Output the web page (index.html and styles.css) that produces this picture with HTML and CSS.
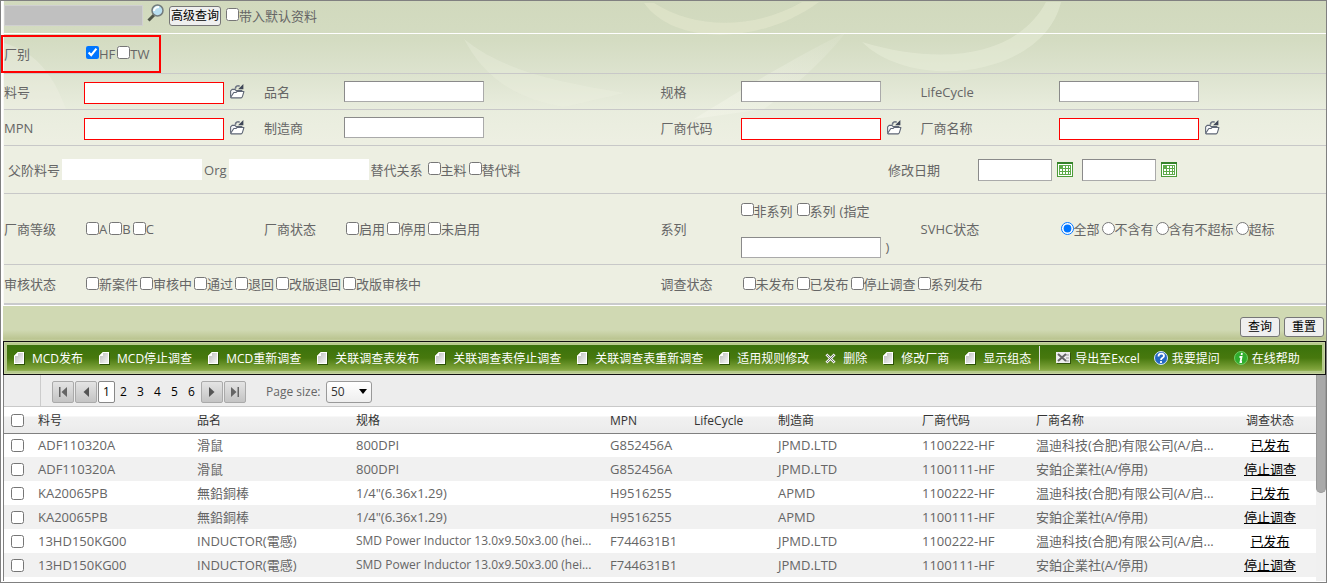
FILE: index.html
```html
<!DOCTYPE html>
<html lang="zh-CN">
<head>
<meta charset="utf-8">
<title>MCD 查询</title>
<link rel="stylesheet" href="styles.css">
</head>
<body>
<svg class="defs" aria-hidden="true">
  <defs>
    <linearGradient id="pg" x1="0" y1="0" x2="1" y2="1"><stop offset="0" stop-color="#bdbdbd"/><stop offset="1" stop-color="#f6f6f6"/></linearGradient>
    <linearGradient id="fade" x1="0" y1="1" x2="1" y2="0"><stop offset="0" stop-color="#f2f4e8" stop-opacity=".6"/><stop offset="1" stop-color="#f2f4e8" stop-opacity=".1"/></linearGradient>
    <symbol id="page" viewBox="0 0 11 13"><path d="M4 1h7v12H1V4z" fill="#2d5208"/><path d="M4 0h6v12H0V4z" fill="#fff"/><path d="M4 1h5v10H1V4h3z" fill="url(#pg)"/><path d="M0 4h4V0z" fill="#fff"/></symbol>
    <symbol id="folder" viewBox="0 0 15 14"><path d="M1.500 12V6.500L3 5h2.500l1 1h5.500v2" fill="#f4f5f7" stroke="#5e6675"/><path d="M1.500 12.500 4.500 8h2l1-1H14l-1.500 5-1 1H2z" fill="#fff" stroke="#5e6675" stroke-linejoin="round"/><path d="M6 4.500C6 2 8 1 10 2" fill="none" stroke="#6b7282" stroke-width="1.500"/><path d="M13.500 0v5H8.500z" fill="#3f4657"/></symbol>
    <symbol id="cal" viewBox="0 0 16 15"><rect x=".5" y=".5" width="15" height="14" fill="#fff" stroke="#4c9b38"/><path d="M0 0h16v2H0z" fill="#35822a"/><path d="M2 3h12v10H2z" fill="#5daa48"/><path d="M6 4h2v2H6zm3 0h2v2H9zm3 0h1v2h-1zM3 7h2v2H3zm3 0h2v2H6zm3 0h2v2H9zm3 0h1v2h-1zM3 10h2v2H3zm3 0h2v2H6zm3 0h2v2H9zm3 0h1v2h-1z" fill="#fff"/></symbol>
    <symbol id="first" viewBox="0 0 10 10"><path d="M1 0h1.500v10H1zM9 0v10L3.500 5z" fill="#666"/></symbol>
    <symbol id="prev" viewBox="0 0 10 10"><path d="M8 0v10L2.500 5z" fill="#555"/></symbol>
  </defs>
</svg>
<main class="page">
  <section class="query">
    <svg class="swirl" viewBox="0 0 1327 150" width="1327" height="150" aria-hidden="true">
      <path d="M640 2C670 44 755 45 815 1L798 1C750 29 690 28 650 2z" fill="#f0f0d8" opacity=".35"/>
      <path d="M1042 1C1015 52 945 67 858 41C910 92 1040 75 1057 1z" fill="#eef2df" opacity=".4"/>
      <path d="M842 31C800 52 756 77 690 118L760 108C785 90 820 60 842 31z" fill="url(#fade)"/>
      <path d="M460 38C500 70 550 80 620 92L560 106C500 96 475 66 460 38z" fill="#eef2e0" opacity=".3"/>
      <path d="M0 42C35 52 50 77 62 108H0z" fill="#f0f2e4" opacity=".35"/>
    </svg>
    <div class="searchbar">
      <input class="quick" type="text" aria-label="快速查询">
      <button class="lens" type="button" aria-label="查找"><svg width="18" height="18" viewBox="0 0 18 18"><path d="M1.500 16.500 7 11" stroke="#4f5548" stroke-width="3"/><circle cx="10.500" cy="6.500" r="5.500" fill="#b9dff1" stroke="#737b7c" stroke-width="1.500"/><path d="M7 7c0-2 2-4 5-4" fill="none" stroke="#fff" stroke-width="2"/></svg></button>
      <button class="btn" type="button">高级查询</button>
      <label><input type="checkbox">带入默认资料</label>
    </div>
    <div class="row tall">
      <div class="plant"><span class="name">厂别</span><span class="checks"><label><input type="checkbox" checked>HF</label><label><input type="checkbox">TW</label></span></div>
    </div>
    <div class="row">
      <label class="name" for="pn">料号</label><div class="field"><input class="box need" id="pn" type="text"><svg class="fold"><use href="#folder"/></svg></div>
      <label class="name" for="nm">品名</label><div class="field"><input class="box" id="nm" type="text"></div>
      <label class="name" for="sp">规格</label><div class="field"><input class="box" id="sp" type="text"></div>
      <label class="name" for="lc">LifeCycle</label><div class="field"><input class="box" id="lc" type="text"></div>
    </div>
    <div class="row">
      <label class="name" for="mpn">MPN</label><div class="field"><input class="box need" id="mpn" type="text"><svg class="fold"><use href="#folder"/></svg></div>
      <label class="name" for="mk">制造商</label><div class="field"><input class="box" id="mk" type="text"></div>
      <label class="name" for="vc">厂商代码</label><div class="field"><input class="box need" id="vc" type="text"><svg class="fold"><use href="#folder"/></svg></div>
      <label class="name" for="vn">厂商名称</label><div class="field"><input class="box need" id="vn" type="text"><svg class="fold"><use href="#folder"/></svg></div>
    </div>
    <div class="row parent">
      <div class="inline">
        <label for="pp">父阶料号</label><input class="plain" id="pp" type="text">
        <label for="org">Org</label><input class="plain" id="org" type="text">
        <span>替代关系</span>
        <span class="checks"><label><input type="checkbox">主料</label><label><input type="checkbox">替代料</label></span>
      </div>
      <div class="dates">
        <label class="datename" for="d1">修改日期</label>
        <input class="box date" id="d1" type="text"><svg class="cal"><use href="#cal"/></svg>
        <input class="box date" type="text" aria-label="修改日期止"><svg class="cal"><use href="#cal"/></svg>
      </div>
    </div>
    <div class="row series-row">
      <span class="name">厂商等级</span><div class="checks in"><label><input type="checkbox">A</label><label><input type="checkbox">B</label><label><input type="checkbox">C</label></div>
      <span class="name">厂商状态</span><div class="checks in"><label><input type="checkbox">启用</label><label><input type="checkbox">停用</label><label><input type="checkbox">未启用</label></div>
      <span class="name">系列</span>
      <div class="series">
        <div class="checks wide"><label><input type="checkbox">非系列</label><label><input type="checkbox">系列</label><span>(指定</span></div>
        <div class="field"><input class="box" type="text" aria-label="指定系列"><span>)</span></div>
      </div>
      <span class="name">SVHC状态</span><div class="checks in"><label><input type="radio" name="svhc" checked>全部</label><label><input type="radio" name="svhc">不含有</label><label><input type="radio" name="svhc">含有不超标</label><label><input type="radio" name="svhc">超标</label></div>
    </div>
    <div class="row tall last">
      <span class="name">审核状态</span><div class="checks in span3"><label><input type="checkbox">新案件</label><label><input type="checkbox">审核中</label><label><input type="checkbox">通过</label><label><input type="checkbox">退回</label><label><input type="checkbox">改版退回</label><label><input type="checkbox">改版审核中</label></div>
      <span class="name">调查状态</span><div class="checks in span3"><label><input type="checkbox">未发布</label><label><input type="checkbox">已发布</label><label><input type="checkbox">停止调查</label><label><input type="checkbox">系列发布</label></div>
    </div>
  </section>
  <div class="actions"><button class="btn act" type="button">查询</button><button class="btn act" type="button">重置</button></div>
  <nav class="toolbar">
    <div class="tools">
      <button type="button"><svg class="doc"><use href="#page"/></svg>MCD发布</button>
      <button type="button"><svg class="doc"><use href="#page"/></svg>MCD停止调查</button>
      <button type="button"><svg class="doc"><use href="#page"/></svg>MCD重新调查</button>
      <button type="button"><svg class="doc"><use href="#page"/></svg>关联调查表发布</button>
      <button type="button"><svg class="doc"><use href="#page"/></svg>关联调查表停止调查</button>
      <button type="button"><svg class="doc"><use href="#page"/></svg>关联调查表重新调查</button>
      <button type="button"><svg class="doc"><use href="#page"/></svg>适用规则修改</button>
      <button type="button"><svg class="doc" viewBox="0 0 12 12"><path d="m1.500 1.500 9 9m0-9-9 9" stroke="#f2f2f2" stroke-width="3"/><path d="m2 2 8 8m0-8-8 8" stroke="#666c60"/></svg>删除</button>
      <button type="button"><svg class="doc"><use href="#page"/></svg>修改厂商</button>
      <button type="button"><svg class="doc"><use href="#page"/></svg>显示组态</button>
    </div>
    <div class="tools extra">
      <button type="button"><svg class="big" viewBox="0 0 16 16"><path d="M1 3h14v11H1z" fill="#31520c"/><path d="M0 2h14v11H0z" fill="#eee"/><path d="M10 5h3M10 8h3M10 11h3" stroke="#999"/><path d="m2 4 8 7m0-7-8 7" stroke="#666" stroke-width="2"/></svg>导出至Excel</button>
      <button type="button"><svg class="big" viewBox="0 0 16 16"><circle cx="8" cy="8" r="6.500" fill="#2368c4" stroke="#dbe9fb"/><path d="M5.500 6.500c0-4 5.500-3.500 5.500-.5C11 8 8 7.500 8 10M8 11v2" fill="none" stroke="#fff" stroke-width="1.800"/></svg>我要提问</button>
      <button type="button"><svg class="big" viewBox="0 0 16 16"><circle cx="8" cy="8" r="6.500" fill="#30ad2d" stroke="#74cf68"/><path d="m9 3-.5 2M6.500 7h2l-1 5H9" fill="none" stroke="#fff" stroke-width="1.800"/></svg>在线帮助</button>
    </div>
  </nav>
  <div class="gridwrap">
    <section class="grid">
      <div class="pager">
        <div class="pages">
          <button class="nav" type="button" aria-label="首页"><svg><use href="#first"/></svg></button>
          <button class="nav" type="button" aria-label="上一页"><svg><use href="#prev"/></svg></button>
          <a class="cur" href="#">1</a><a href="#">2</a><a href="#">3</a><a href="#">4</a><a href="#">5</a><a href="#">6</a>
          <button class="nav after" type="button" aria-label="下一页"><svg class="flip"><use href="#prev"/></svg></button>
          <button class="nav after" type="button" aria-label="末页"><svg class="flip"><use href="#first"/></svg></button>
          <label class="sizename" for="size">Page size:</label>
          <span class="pick"><select id="size"><option>50</option></select></span>
        </div>
      </div>
      <table>
        <colgroup><col class="c0"><col class="c1"><col class="c1"><col class="c3"><col class="c4"><col class="c4"><col class="c6"><col class="c7"><col class="c8"><col class="c9"></colgroup>
        <thead><tr><th><input type="checkbox" aria-label="全选"></th><th>料号</th><th>品名</th><th>规格</th><th>MPN</th><th>LifeCycle</th><th>制造商</th><th>厂商代码</th><th>厂商名称</th><th class="mid">调查状态</th></tr></thead>
        <tbody>
          <tr><td><input type="checkbox" aria-label="选择"></td><td>ADF110320A</td><td>滑鼠</td><td>800DPI</td><td>G852456A</td><td></td><td>JPMD.LTD</td><td>1100222-HF</td><td>温迪科技(合肥)有限公司(A/启...</td><td class="mid"><a href="#">已发布</a></td></tr>
          <tr><td><input type="checkbox" aria-label="选择"></td><td>ADF110320A</td><td>滑鼠</td><td>800DPI</td><td>G852456A</td><td></td><td>JPMD.LTD</td><td>1100111-HF</td><td>安鉑企業社(A/停用)</td><td class="mid"><a href="#">停止调查</a></td></tr>
          <tr><td><input type="checkbox" aria-label="选择"></td><td>KA20065PB</td><td>無鉛銅棒</td><td>1/4"(6.36x1.29)</td><td>H9516255</td><td></td><td>APMD</td><td>1100222-HF</td><td>温迪科技(合肥)有限公司(A/启...</td><td class="mid"><a href="#">已发布</a></td></tr>
          <tr><td><input type="checkbox" aria-label="选择"></td><td>KA20065PB</td><td>無鉛銅棒</td><td>1/4"(6.36x1.29)</td><td>H9516255</td><td></td><td>APMD</td><td>1100111-HF</td><td>安鉑企業社(A/停用)</td><td class="mid"><a href="#">停止调查</a></td></tr>
          <tr><td><input type="checkbox" aria-label="选择"></td><td>13HD150KG00</td><td>INDUCTOR(電感)</td><td class="long">SMD Power Inductor 13.0x9.50x3.00 (hei...</td><td>F744631B1</td><td></td><td>JPMD.LTD</td><td>1100222-HF</td><td>温迪科技(合肥)有限公司(A/启...</td><td class="mid"><a href="#">已发布</a></td></tr>
          <tr><td><input type="checkbox" aria-label="选择"></td><td>13HD150KG00</td><td>INDUCTOR(電感)</td><td class="long">SMD Power Inductor 13.0x9.50x3.00 (hei...</td><td>F744631B1</td><td></td><td>JPMD.LTD</td><td>1100111-HF</td><td>安鉑企業社(A/停用)</td><td class="mid"><a href="#">停止调查</a></td></tr>
        </tbody>
      </table>
    </section>
    <div class="track"><div class="thumb"></div></div>
  </div>
</main>
</body>
</html>
```
FILE: styles.css
```css
* { box-sizing: border-box; }
body {
  margin: 0;
  font: 13px/18px "Open Sans", "Noto Sans CJK SC", sans-serif;
  color: #666;
}
button, input, select { font: inherit; margin: 0; }
input[type="checkbox"], input[type="radio"] { width: 13px; height: 13px; flex: none; display: block; }
svg { display: block; flex: none; }
.defs { position: absolute; width: 0; height: 0; }
.page { min-height: 100vh; border: 1px solid #808080; padding-left: 2px; background: #fff; overflow: hidden; }
.query {
  position: relative;
  border-left: 1px solid #f8f8f4;
  background: linear-gradient(#d1d9bd 0, #d4dcc2 40px, #dde3cf 74px, #e9edde 110px, #edefe2 140px);
}
.swirl { position: absolute; top: 0; left: 0; }
.searchbar { position: relative; display: flex; align-items: center; height: 33px; padding-bottom: 3px; border-bottom: 1px solid #fff; }
.quick { width: 139px; height: 21px; border: 1px solid #d0d0d0; background: #c0c0c0; margin-right: 4px; }
.lens { border: 0; padding: 0; background: none; margin-right: 4px; margin-bottom: 6px; }
.btn {
  height: 20px; padding: 0 1px; border: 1px solid #767676; border-radius: 3px;
  background: #efefef; color: #000; font-size: 12px; line-height: 18px;
}
.searchbar label { margin-left: 5px; }
label { display: flex; align-items: center; white-space: nowrap; }
label > input[type="checkbox"], label > input[type="radio"] { margin-bottom: 2px; }
.row {
  position: relative;
  display: grid;
  grid-template-columns: 80px 180px 80px minmax(0, 316fr) 80px 180px 138px minmax(0, 267fr);
  align-items: center;
  height: 36px;
  border-bottom: 1px solid #c8c8c8;
}
.tall { height: 40px; }
.last { border-bottom: 2px solid #c9cacc; }
.plant {
  grid-column: 1 / 3; justify-self: start; position: relative;
  display: flex; align-items: center; width: 160px; height: 38px;
  margin-left: -3px; padding-left: 1px; border: 2px solid #f00;
}
.plant .name { width: 82px; }
.field { display: flex; align-items: center; gap: 5px; white-space: nowrap; }
.box { width: 140px; height: 21px; border: 1px solid #aaa; border-top-color: #8a8a8a; border-left-color: #8a8a8a; background: #fff; }
.need { height: 22px; border-color: #f00; }
.row .need { margin-top: 2px; }
.fold { width: 16px; height: 15px; }
.checks { display: flex; align-items: center; gap: 2px; white-space: nowrap; }
.in { padding-left: 2px; }
.wide { gap: 4px; }
.span3 { grid-column: span 3; }
.parent { grid-template-columns: minmax(0, 1fr) 438px; height: 48px; }
.inline { display: flex; align-items: center; gap: 2px; padding-left: 4px; white-space: nowrap; }
.inline .checks { margin-left: 3px; }
.plain { width: 140px; height: 21px; border: 0; background: #fff; }
.dates { display: flex; align-items: center; }
.datename { width: 90px; }
.date { width: 74px; height: 22px; }
.cal { width: 16px; height: 15px; margin: 0 9px 0 5px; }
.series-row { height: 71px; }
.series { display: grid; gap: 16px; }
.series .checks { height: 20px; }
.actions {
  display: flex; justify-content: flex-end; align-items: center; gap: 4px;
  height: 36px; padding: 7px 2px 0 0; border-top: 1px solid #fff;
  background: linear-gradient(#d0d9b3 0, #d0d9b3 24px, #bbc591 33px, #cbd5aa 35px);
}
.act { width: 40px; }
.toolbar {
  display: flex; align-items: center; height: 34px; padding-left: 10px;
  border: 1px solid #111; box-shadow: inset 0 0 0 1px #c6d3a2, inset 0 0 0 3px #b6ca8c;
  background: linear-gradient(#37700b, #47780e 50%, #80a43c 85%, #bccd93);
}
.tools { display: flex; gap: 16px; height: 24px; padding-right: 8px; border-right: 1px solid #ddd; }
.tools button {
  display: flex; align-items: center; gap: 7px; padding: 2px 0 0; border: 0; background: none;
  color: #fff; font-size: 12px; white-space: nowrap;
}
.extra { padding-left: 16px; border: 0; gap: 13px; }
.extra button { gap: 3px; }
.doc { width: 11px; height: 13px; margin-bottom: 2px; }
.big { width: 16px; height: 16px; margin-bottom: 2px; }
.gridwrap { display: flex; align-items: stretch; min-height: 206px; }
.grid { flex: 1; min-width: 0; border-left: 1px solid #808080; }
.pager { height: 32px; padding-left: 36px; border-bottom: 1px solid #c9c9c9; background: #ededed; }
.pages { display: flex; align-items: center; height: 31px; padding: 2px 0 0 11px; border-left: 1px solid #ccc; }
.pages a { width: 17px; text-align: center; color: #000; font-size: 12px; text-decoration: none; }
.pages .cur { border: 1px solid #888; border-radius: 2px; background: #fff; line-height: 20px; }
.nav {
  display: grid; place-items: center; width: 22px; height: 22px; padding: 0; margin-right: 1px;
  border: 1px solid #aaa; border-radius: 2px; background: linear-gradient(#e4e4e4, #c4c4c4);
}
.after { margin: 0 0 0 1px; }
.nav svg { width: 10px; height: 10px; }
.flip { transform: scaleX(-1); }
.sizename { width: 60px; margin-left: 20px; font-size: 12px; }
.pick { position: relative; }
.pick::after {
  content: ""; position: absolute; right: 5px; top: 8px;
  border: 4px solid transparent; border-top: 5px solid #000; border-bottom: 0; pointer-events: none;
}
.pick select {
  display: block; appearance: none; width: 46px; height: 22px; padding: 0 4px;
  border: 1px solid #999; border-radius: 3px; background: linear-gradient(#fff, #eee); color: #333; font-size: 12px;
}
table { width: 100%; table-layout: fixed; border-collapse: collapse; }
.c0 { width: 27px; } .c1 { width: 159px; } .c3 { width: 254px; } .c4 { width: 84px; }
.c6 { width: 144px; } .c7 { width: 114px; } .c8 { width: 195px; } .c9 { width: 92px; }
th, td { padding: 0 0 0 7px; height: 24px; text-align: left; white-space: nowrap; }
th {
  height: 26px; padding-top: 2px; font-size: 12px; font-weight: 400; color: #333; border-bottom: 1px solid #808080;
  background: linear-gradient(#fff 0, #fff 9px, #f1f1f1 10px, #ebebeb);
}
tbody tr:nth-child(even) { background: #f1f1f1; }
.long { font-size: 12px; }
.mid { padding-left: 0; text-align: center; }
td a { color: #000; }
.track { width: 10px; background: #f0f0f0; }
.thumb { height: 118px; border-radius: 0 0 5px 5px; background: #a9a9a9; border: 1px solid #999; border-top: 0; }
```
